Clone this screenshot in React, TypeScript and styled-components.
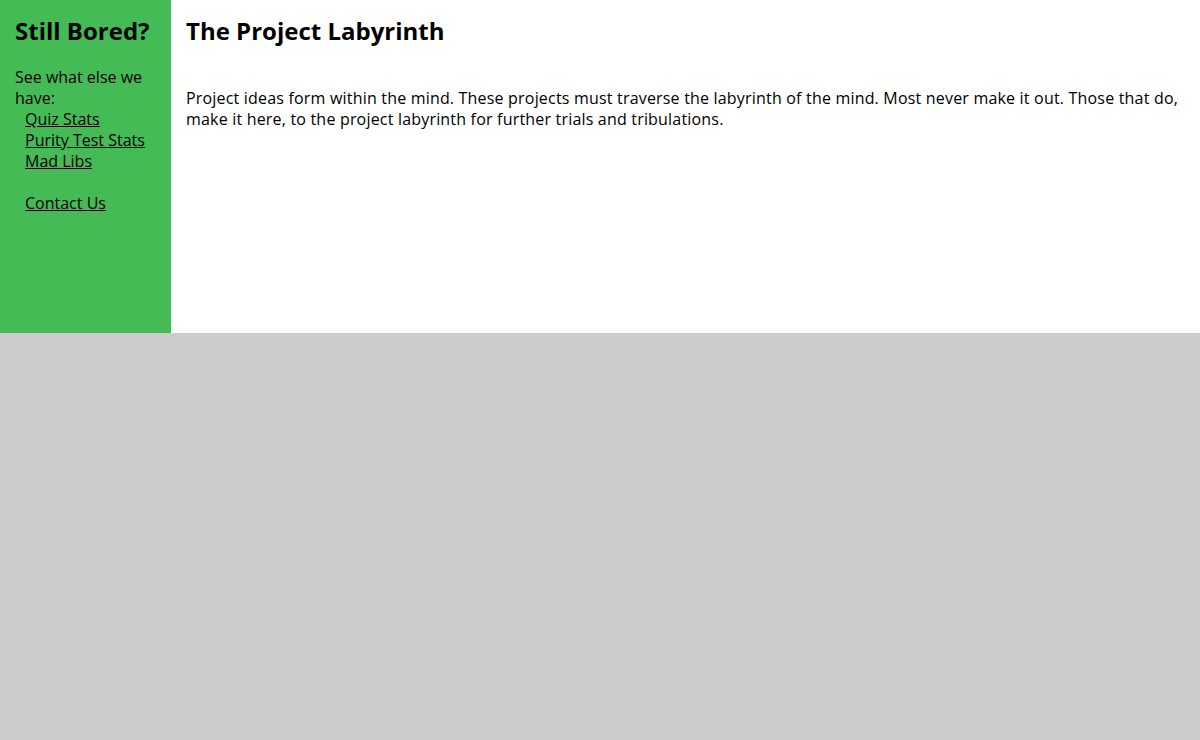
import styled, { createGlobalStyle } from 'styled-components';

const GlobalStyle = createGlobalStyle`
  html, body {
    margin: 0;
    padding: 0;
    background: #cccccc;
    font-family: "Open Sans", "Noto Sans", sans-serif;
    font-size: 16px;
    color: #000;
  }
`;

const links = ['Quiz Stats', 'Purity Test Stats', 'Mad Libs'];

const App = () => {
    return (
        <>
            <GlobalStyle />
            <Layout>
                <Sidebar>
                    <Heading>Still Bored?</Heading>
                    <Blurb>See what else we have:</Blurb>
                    <LinkList>
                        {links.map((l) => (
                            <li key={l}><NavLink href="#">{l}</NavLink></li>
                        ))}
                    </LinkList>
                    <LinkList $spaced>
                        <li><NavLink href="#">Contact Us</NavLink></li>
                    </LinkList>
                </Sidebar>
                <Main>
                    <Heading>The Project Labyrinth</Heading>
                    <Intro>
                        Project ideas form within the mind. These projects must traverse the labyrinth of the mind.
                        Most never make it out. Those that do, make it here, to the project labyrinth for further
                        trials and tribulations.
                    </Intro>
                </Main>
            </Layout>
        </>
    );
};

const Layout = styled.div`
  display: flex;
  height: 45vh;
`;

const Sidebar = styled.nav`
  width: 141px;
  padding: 15px;
  background: #44bb55;
  line-height: 21px;
`;

const Main = styled.main`
  flex: 1;
  padding: 15px;
  background: #ffffff;
  line-height: 21px;
`;

const Heading = styled.h1`
  font-size: 24px;
  line-height: 32px;
  font-weight: 700;
  margin: 0;
`;

const Blurb = styled.p`
  margin: 20px 0 0;
`;

const LinkList = styled.ul<{ $spaced?: boolean }>`
  list-style: none;
  margin: ${(p) => (p.$spaced ? '21px' : '0')} 0 0;
  padding: 0 0 0 10px;
`;

const NavLink = styled.a`
  color: #000;
  text-decoration: underline;
`;

const Intro = styled.p`
  margin: 41px 0 0;
  letter-spacing: 0.19px;
`;

export default App;
